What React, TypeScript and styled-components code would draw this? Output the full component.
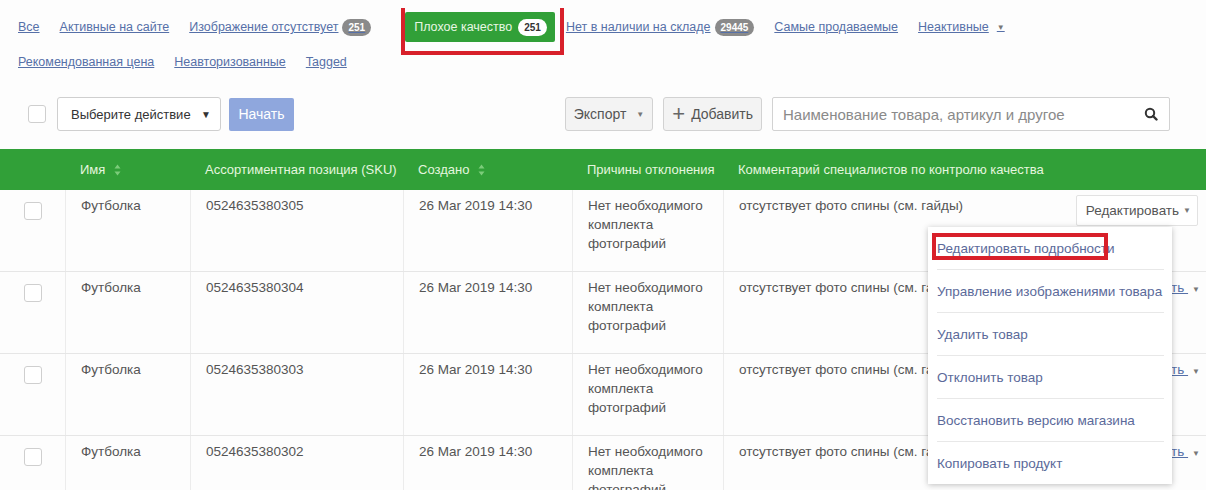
import React from 'react';
import styled, { createGlobalStyle } from 'styled-components';

const GlobalStyle = createGlobalStyle`
  html, body {
    margin: 0;
    padding: 0;
    background: #fdfdfd;
    font-family: "Liberation Sans", Arial, sans-serif;
    font-size: 13.5px;
    color: #555;
  }
`;

const GREEN = '#31a038';
const LINK = '#5670a8';

const Page = styled.div`
  width: 1206px;
  height: 490px;
  overflow: hidden;
  position: relative;
`;

const Tabs = styled.div`
  display: flex;
  flex-wrap: wrap;
  align-items: center;
  column-gap: 20px;
  row-gap: 5px;
  padding: 12px 0 0 18px;
  width: 1020px;
  font-size: 12.5px;
`;

const TabLink = styled.a`
  display: inline-flex;
  align-items: center;
  gap: 4px;
  height: 30px;
  color: ${LINK};
  text-decoration: underline;
  cursor: pointer;
`;

const ActiveTab = styled.span`
  position: relative;
  margin: 0 -9px 0 14px;
  display: inline-flex;
  align-items: center;
  gap: 6px;
  height: 30px;
  padding: 0 8px 0 9px;
  background: ${GREEN};
  color: #e8f7e4;
  border-radius: 2px;
`;

const Badge = styled.span<{ $light?: boolean }>`
  display: inline-block;
  padding: 3px 6px;
  border-radius: 10px;
  font-size: 10px;
  font-weight: bold;
  text-decoration: none;
  background: ${({ $light }) => ($light ? '#fff' : '#8a8a8a')};
  color: ${({ $light }) => ($light ? '#333' : '#fff')};
`;

/* red marker frame drawn over the active tab */
const TabFrame = styled.span`
  position: absolute;
  left: -4px;
  right: -9px;
  top: -4px;
  bottom: -13px;
  border: 4px solid #d8202a;
  border-top: none;
  pointer-events: none;
`;

const Caret = styled.span`
  font-size: 8px;
  margin-left: 4px;
  display: inline-block;
  color: #777;
`;

const Toolbar = styled.div`
  display: flex;
  align-items: center;
  padding: 20px 36px 0 28px;
  height: 34px;
`;

const CheckBox = styled.span`
  display: inline-block;
  width: 18px;
  height: 18px;
  border: 1px solid #cfcfcf;
  border-radius: 3px;
  background: #fff;
  box-sizing: border-box;
`;

const ActionSelect = styled.div`
  margin-left: 11px;
  width: 164px;
  height: 34px;
  box-sizing: border-box;
  border: 1px solid #cfcfcf;
  border-radius: 3px;
  background: #fff;
  display: flex;
  align-items: center;
  justify-content: space-between;
  padding: 0 9px 0 13px;
  color: #333;
  font-size: 13px;
`;

const StartButton = styled.button`
  margin-left: 8px;
  width: 65px;
  height: 33px;
  border: none;
  border-radius: 2px;
  background: #8fa7dd;
  color: #fff;
  font: inherit;
  font-size: 14px;
`;

const Spacer = styled.div`
  flex: 1;
`;

const GrayButton = styled.button`
  height: 34px;
  margin-right: 10px;
  padding: 0 8px;
  border: 1px solid #d2d2d2;
  border-radius: 3px;
  background: #f3f3f3;
  color: #555;
  font: inherit;
  font-size: 14px;
  display: inline-flex;
  align-items: center;
  gap: 6px;
`;

const Search = styled.div`
  width: 398px;
  height: 34px;
  box-sizing: border-box;
  border: 1px solid #d2d2d2;
  border-radius: 2px;
  background: #fff;
  display: flex;
  align-items: center;
  justify-content: space-between;
  padding: 0 11px 0 10px;
  color: #8a8a8a;
  font-size: 15px;
`;

const Grid = styled.div`
  display: grid;
  grid-template-columns: 65px 125px 213px 169px 151px 1fr;
`;

const Header = styled(Grid)`
  margin-top: 18px;
  height: 41px;
  background: ${GREEN};
  color: #e4f6df;
  align-items: center;
  font-size: 13px;
`;

const HeadCell = styled.div`
  padding-left: 15px;
  display: flex;
  align-items: center;
  gap: 9px;
  white-space: nowrap;
`;

const Row = styled(Grid)`
  height: 81px;
  border-bottom: 1px solid #e6e6e6;
  background: #fdfdfd;
`;

const Cell = styled.div`
  border-left: 1px solid #ececec;
  padding: 6px 8px 0 15px;
  line-height: 19px;
  display: flex;
  align-items: flex-start;
  justify-content: space-between;
  &:first-child {
    border-left: none;
    justify-content: center;
    padding: 12px 0 0;
  }
`;

const Reasons = styled.div`
  width: 120px;
`;

const EditButton = styled.span`
  margin-top: -1px;
  height: 29px;
  padding: 0 6px 0 9px;
  display: inline-flex;
  align-items: center;
  background: #fff;
  border: 1px solid #e2e2e2;
  border-radius: 2px;
  color: #555;
`;

const EditLink = styled.span`
  color: ${LINK};
  text-decoration: underline;
  margin-right: -2px;
`;

const Menu = styled.div`
  position: absolute;
  left: 928px;
  top: 227px;
  width: 236px;
  background: #fff;
  box-shadow: 0 1px 6px rgba(0, 0, 0, 0.25);
  padding: 1px 8px 0 0;
`;

const MenuItem = styled.div<{ $marked?: boolean }>`
  position: relative;
  margin-left: 9px;
  height: ${({ $marked }) => ($marked ? '41px' : '42px')};
  display: flex;
  align-items: center;
  color: #5b6a9a;
  border-bottom: 1px solid #e8e8e8;
  white-space: nowrap;
  &:last-child {
    border-bottom: none;
  }
`;

const MarkFrame = styled.span`
  position: absolute;
  left: -5px;
  width: 176px;
  top: 5px;
  height: 27px;
  border: 4px solid #d8202a;
  box-sizing: border-box;
  pointer-events: none;
`;

function SortIcon() {
  return (
    <svg width="7" height="12" viewBox="0 0 7 12">
      <path d="M3.5 0.5 L6.5 4.5 H0.5 Z M3.5 11.5 L6.5 7.5 H0.5 Z" fill="#7ccc7a" />
    </svg>
  );
}

function SearchIcon() {
  return (
    <svg width="14" height="14" viewBox="0 0 14 14">
      <circle cx="6" cy="6" r="4.2" fill="none" stroke="#333" strokeWidth="2" />
      <path d="M9 9 L12.5 12.5" stroke="#333" strokeWidth="2.4" strokeLinecap="round" />
    </svg>
  );
}

const skus = ['0524635380305', '0524635380304', '0524635380303', '0524635380302'];

const menuItems = [
  'Управление изображениями товара',
  'Удалить товар',
  'Отклонить товар',
  'Восстановить версию магазина',
  'Копировать продукт',
];

export default function App() {
  return (
    <Page>
      <GlobalStyle />
      <Tabs>
        <TabLink>Все</TabLink>
        <TabLink>Активные на сайте</TabLink>
        <TabLink>
          Изображение отсутствует <Badge>251</Badge>
        </TabLink>
        <ActiveTab>
          Плохое качество <Badge $light>251</Badge>
          <TabFrame />
        </ActiveTab>
        <TabLink>
          Нет в наличии на складе <Badge>29445</Badge>
        </TabLink>
        <TabLink>Самые продаваемые</TabLink>
        <TabLink>
          Неактивные <Caret>▼</Caret>
        </TabLink>
        <TabLink>Рекомендованная цена</TabLink>
        <TabLink>Неавторизованные</TabLink>
        <TabLink>Tagged</TabLink>
      </Tabs>

      <Toolbar>
        <CheckBox />
        <ActionSelect>
          Выберите действие <span style={{ fontSize: 10, color: '#333' }}>▼</span>
        </ActionSelect>
        <StartButton>Начать</StartButton>
        <Spacer />
        <GrayButton>
          Экспорт <Caret>▼</Caret>
        </GrayButton>
        <GrayButton>
          <span style={{ fontSize: 22, lineHeight: 1, color: '#666' }}>+</span> Добавить
        </GrayButton>
        <Search>
          Наименование товара, артикул и другое
          <SearchIcon />
        </Search>
      </Toolbar>

      <Header>
        <HeadCell />
        <HeadCell>
          Имя <SortIcon />
        </HeadCell>
        <HeadCell>
          Ассортиментная позиция (SKU) <SortIcon />
        </HeadCell>
        <HeadCell>
          Создано <SortIcon />
        </HeadCell>
        <HeadCell>Причины отклонения</HeadCell>
        <HeadCell>Комментарий специалистов по контролю качества</HeadCell>
      </Header>

      {skus.map((sku, i) => (
        <Row key={sku}>
          <Cell>
            <CheckBox />
          </Cell>
          <Cell>Футболка</Cell>
          <Cell>{sku}</Cell>
          <Cell>26 Mar 2019 14:30</Cell>
          <Cell>
            <Reasons>Нет необходимого комплекта фотографий</Reasons>
          </Cell>
          <Cell>
            <span>отсутствует фото спины (см. гайды)</span>
            {i === 0 ? (
              <EditButton>
                Редактировать <Caret>▼</Caret>
              </EditButton>
            ) : (
              <EditLink>
                Редактировать <Caret>▼</Caret>
              </EditLink>
            )}
          </Cell>
        </Row>
      ))}

      <Menu>
        <MenuItem $marked>
          Редактировать подробности
          <MarkFrame />
        </MenuItem>
        {menuItems.map((item) => (
          <MenuItem key={item}>{item}</MenuItem>
        ))}
      </Menu>
    </Page>
  );
}
